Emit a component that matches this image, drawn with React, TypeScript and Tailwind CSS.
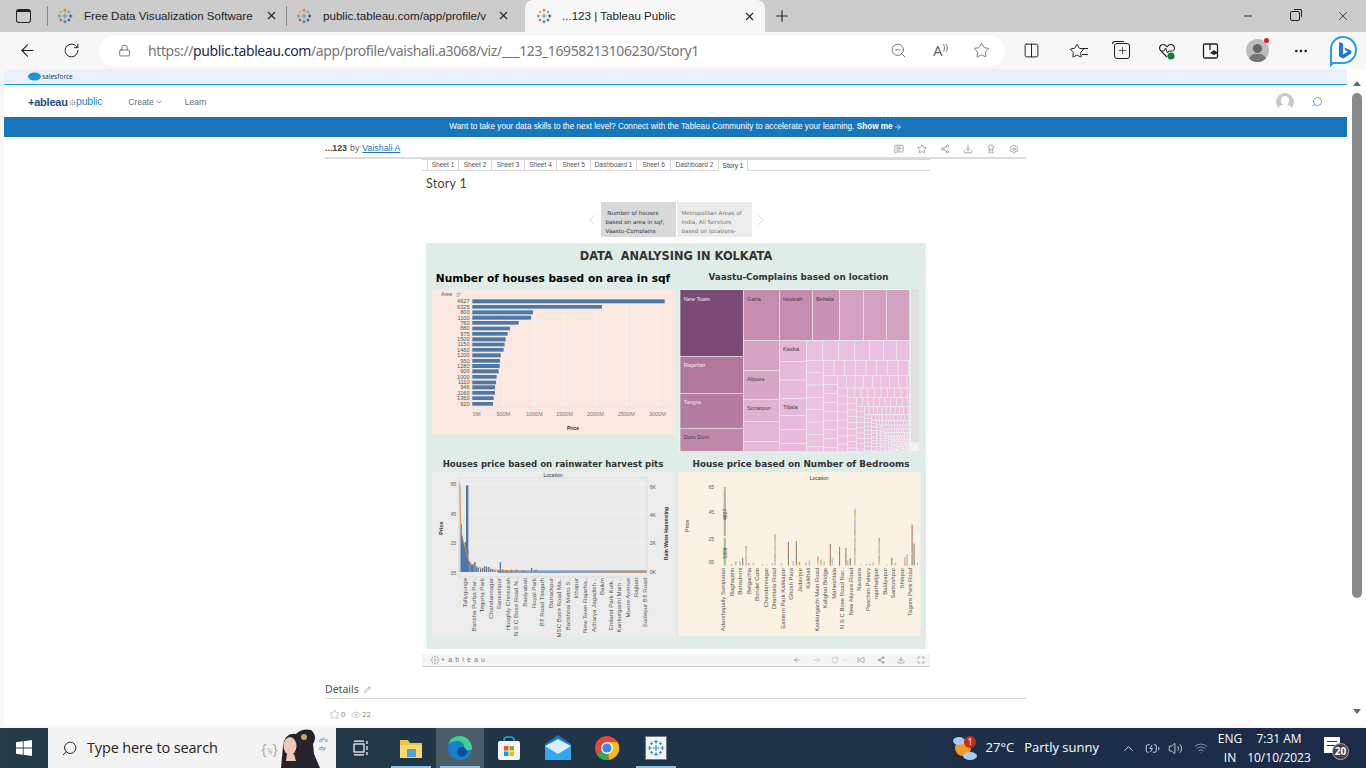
import React from 'react';
import {
  ArrowLeft, RotateCw, Lock, ZoomOut, Star, Columns2, Search, X, Plus, Minus, ChevronDown, ChevronUp,
  ChevronLeft, ChevronRight, MoreHorizontal, Share2, Settings, Award, Pencil, Eye, Volume2, Wifi, ArrowRight,
  Download, MessageSquareText, BatteryCharging, SkipBack, Maximize,
} from 'lucide-react';

const CROSSES: [number, number, number, string][] = [
  [12, 12, 4, '#7f8fa8'], [12, 3.5, 2.6, '#e8762b'], [12, 20.5, 2.6, '#4e79a7'], [3.5, 12, 2.6, '#59a89c'],
  [20.5, 12, 2.6, '#1f4e89'], [6, 6, 2, '#f0a030'], [18, 6, 2, '#5aa5c8'], [6, 18, 2, '#c8354a'], [18, 18, 2, '#1f3f77'],
];

const TableauMark = ({ size = 16, mono }: { size?: number; mono?: string }) => (
  <svg width={size} height={size} viewBox="0 0 24 24" fill="none" className="shrink-0">
    {CROSSES.map(([x, y, r, c], i) => (
      <path key={i} d={`M${x - r} ${y}H${x + r}M${x} ${y - r}V${y + r}`} stroke={mono || c} strokeWidth="1.6" />
    ))}
  </svg>
);

const Tab = ({ title, width }: { title: string; width: number }) => (
  <div className="flex items-center h-full shrink-0" style={{ width }}>
    <TableauMark />
    <span className="ml-[11px] flex-1 min-w-0 text-[11.6px] text-[#222] whitespace-nowrap font-['Liberation_Sans',sans-serif]">{title}</span>
    <X size={13} className="ml-[8px] text-[#222] shrink-0" />
  </div>
);

const BrowserChrome = () => (
  <>
    <div className="h-[32px] bg-[#cccccc] flex items-center shrink-0">
      <div className="w-[47px] flex justify-center">
        <div className="w-[15px] h-[14px] rounded-[3px] border-[1.5px] border-[#222] border-t-[3px]" />
      </div>
      <div className="w-px h-[20px] bg-[#888]" />
      <div className="ml-[9px]"><Tab title="Free Data Visualization Software" width={221} /></div>
      <div className="ml-[8px] w-px h-[20px] bg-[#888]" />
      <div className="ml-[9px]"><Tab title="public.tableau.com/app/profile/v" width={214} /></div>
      <div className="ml-[15px] w-[240px] h-full bg-[#f7f7f7] rounded-t-[8px] flex items-center pl-[11px] pr-[9px]">
        <TableauMark />
        <span className="ml-[10px] flex-1 text-[11.6px] text-[#222] whitespace-nowrap font-['Liberation_Sans',sans-serif]">...123 | Tableau Public</span>
        <X size={13} className="text-[#222]" />
      </div>
      <Plus size={18} strokeWidth={1.5} className="ml-[8px] text-[#222]" />
      <div className="ml-auto flex items-center">
        <Minus size={12} className="mr-[36px] text-[#222]" />
        <div className="mr-[36px] relative w-[10px] h-[10px] border border-[#222] rounded-[2px]">
          <div className="absolute -top-[3px] -right-[3px] w-[8px] h-[8px] border-t border-r border-[#222] rounded-tr-[2px]" />
        </div>
        <X size={14} strokeWidth={1.4} className="mr-[16px] text-[#222]" />
      </div>
    </div>
    <div className="h-[37px] bg-[#f7f7f7] flex items-center shrink-0 relative">
      <ArrowLeft size={19} strokeWidth={1.4} className="ml-[18px] text-[#222]" />
      <RotateCw size={17} strokeWidth={1.4} className="ml-[26px] text-[#222]" />
      <div className="ml-[19px] w-[906px] h-[30px] bg-white rounded-full flex items-center pl-[19px]">
        <Lock size={13} strokeWidth={1.4} className="text-[#555]" />
        <span className="ml-[17px] text-[14px] tracking-[-0.4px] text-[#767676] whitespace-nowrap">
          https://<span className="text-[#1c2b4a]">public.tableau.com</span>/app/profile/vaishali.a3068/viz/___123_16958213106230/Story1
        </span>
        <div className="ml-auto flex items-center text-[#666] pr-[15px]">
          <ZoomOut size={17} strokeWidth={1.2} />
          <span className="ml-[26px] w-[18px] text-[15px] leading-none">A<span className="text-[9px] align-top">))</span></span>
          <Star size={17} strokeWidth={1.2} className="ml-[22px]" />
        </div>
      </div>
      <div className="ml-[18px] flex items-center text-[#222]">
        <Columns2 size={17} strokeWidth={1.4} />
        <div className="ml-[29px] relative">
          <Star size={16} strokeWidth={1.5} />
          <div className="absolute left-[13px] top-[5px] w-[6px] h-[7px] border-y border-[#222]" />
        </div>
        <div className="ml-[29px] relative w-[16px] h-[16px] border-[1.5px] border-[#222] rounded-[3px] flex items-center justify-center">
          <div className="absolute -left-[3px] -top-[3px] w-[12px] h-[3px] border-t-[1.5px] border-l-[1.5px] border-[#222] rounded-tl-[3px]" />
          <Plus size={11} strokeWidth={1.6} />
        </div>
        <svg className="ml-[28px]" width="18" height="18" viewBox="0 0 18 18" fill="none">
          <path d="M9 15 2.600 8.600a3.600 3.600 0 0 1 5.200-5L9 4.700l1.200-1.100a3.600 3.600 0 0 1 5.200 5" stroke="#222" strokeWidth="1.2" />
          <path d="M3 9h3l1.500-3 2 5 1.400-2H15" stroke="#222" strokeWidth="1" />
          <circle cx="13" cy="14" r="3.500" fill="#107c41" />
        </svg>
        <svg className="ml-[26px]" width="18" height="18" viewBox="0 0 18 18" fill="none">
          <rect x="1.500" y="2" width="14" height="14" rx="1.500" stroke="#222" strokeWidth="1.300" />
          <path d="M8 2v6" stroke="#222" strokeWidth="1.300" />
          <path d="M8 11l4-3 4 3-4 2z" fill="#222" />
        </svg>
        <div className="ml-[26px] relative w-[23px] h-[23px] rounded-full bg-[#bdbdbd] overflow-hidden">
          <div className="absolute left-[7px] top-[5px] w-[9px] h-[9px] rounded-full bg-[#666]" />
          <div className="absolute left-[3px] top-[15px] w-[17px] h-[12px] rounded-full bg-[#777]" />
        </div>
        <div className="w-[5px] h-[5px] rounded-full bg-[#e81123] -ml-[5px] -mt-[20px] z-10" />
        <MoreHorizontal size={16} className="ml-[24px]" />
        <svg className="ml-[19px]" width="30" height="32" viewBox="0 0 30 32" fill="none">
          <path d="M15 2a13 13 0 0 1 13 13 13 13 0 0 1-13 13H5l-2 2V15A12 12 0 0 1 15 2z" fill="#fff" stroke="#2b9de8" strokeWidth="2" />
          <path d="M11 7l4 1.500v11l5-3-2.500-1-1.200-3 7 3v3l-8 5-4.300-2z" fill="#1f78d1" />
        </svg>
      </div>
    </div>
  </>
);

const Banner = () => (
  <div className="shrink-0">
    <div className="h-[15px] bg-[#eaf1fb] border-b border-[#1ba0d8] flex items-center pl-[24px] box-content">
      <svg width="13" height="9" viewBox="0 0 13 9"><ellipse cx="6.500" cy="4.500" rx="6.500" ry="4" fill="#1b96d6" /></svg>
      <span className="ml-[1px] text-[6.5px] text-[#28455f]">salesforce</span>
    </div>
    <div className="h-[32px] flex items-center pl-[24px] pr-[24px] pt-[2px] font-['Liberation_Sans',sans-serif]">
      <span className="w-[41px] text-[11px] font-bold text-[#1f4e89] tracking-[-0.02em]">+ableau</span>
      <TableauMark size={7} />
      <span className="text-[10.5px] text-[#2a86c8] tracking-[-0.02em]">public</span>
      <span className="ml-[26px] text-[8.5px] text-[#5d6d7d]">Create</span>
      <ChevronDown size={8} className="ml-[1px] text-[#5d6d7d]" />
      <span className="ml-[22px] text-[8.5px] text-[#5d6d7d]">Learn</span>
      <div className="ml-auto w-[18px] h-[18px] rounded-full bg-[#c8c8c8] relative overflow-hidden">
        <div className="absolute left-[5px] top-[3px] w-[8px] h-[9px] rounded-full bg-white" />
        <div className="absolute left-[2px] top-[12px] w-[14px] h-[10px] rounded-full bg-white" />
      </div>
      <Search size={12} strokeWidth={1.2} className="ml-[17px] text-[#2a6ab0] -scale-x-100" />
    </div>
    <div className="h-[20px] bg-[#1a76bb] flex items-center justify-center text-[8.2px] text-white font-['Liberation_Sans',sans-serif]">
      Want to take your data skills to the next level? Connect with the Tableau Community to accelerate your learning.&nbsp;
      <span className="font-bold">Show me</span>
      <ArrowRight size={8} className="ml-[1px]" />
    </div>
  </div>
);

const BARS: [string, number, number, number][] = [
  ['4627', 71, 58, 716], ['6325', 87, 75, 528], ['800', 104, 91, 321], ['1100', 120, 107, 315], ['760', 135, 123, 278],
  ['880', 152, 140, 252], ['975', 168, 156, 245], ['1500', 185, 172, 239], ['1150', 200, 188, 236], ['1460', 216, 204, 233],
  ['1200', 233, 220, 224], ['950', 249, 237, 222], ['1280', 265, 252, 221], ['900', 281, 268, 218], ['1000', 297, 285, 212],
  ['1110', 314, 302, 210], ['946', 329, 316, 207], ['1160', 345, 333, 207], ['1360', 361, 349, 203], ['920', 378, 366, 201],
];

const BarChart = () => (
  <svg viewBox="18 27 732 438" className="w-[244px] h-[146px] block" fontFamily="'Liberation Sans', sans-serif">
    <rect x="18" y="27" width="732" height="438" fill="#fae9e1" />
    <text x="46" y="49" fontSize="15" fill="#555">Area</text>
    <path d="M92 40h14M92 45h10M92 50h6" stroke="#777" strokeWidth="1.500" />
    {[232, 325, 417, 510, 601, 694].map(x => <path key={x} d={`M${x} 56V380`} stroke="#fff" strokeWidth="2" opacity="0.7" />)}
    <path d="M139 56V380M139 380H750" stroke="#f3ddd3" strokeWidth="2" />
    {BARS.map(([label, base, top, end]) => (
      <g key={label + top}>
        <rect x="139" y={top} width={end - 139} height={base - top - 1} fill="#4e79a7" />
        <text x="131" y={base - 1} textAnchor="end" fontSize="17" fill="#555">{label}</text>
      </g>
    ))}
    {['0M', '500M', '1000M', '1500M', '2000M', '2500M', '3000M'].map((t, i) => (
      <text key={t} x={[152, 232, 325, 415, 508, 601, 694][i]} y="409" textAnchor="middle" fontSize="16.500" fill="#777">{t}</text>
    ))}
    <text x="441" y="449" textAnchor="middle" fontSize="15" fontWeight="bold" fill="#333">Price</text>
  </svg>
);

type Cell = { x: number; y: number; w: number; h: number; c: string; t?: string };

const TOP_CELLS: Cell[] = [
  { x: 13, y: 27, w: 188, h: 198, c: '#7b4a75', t: 'New Town' },
  { x: 13, y: 227, w: 188, h: 109, c: '#b2789b', t: 'Rajarhat' },
  { x: 13, y: 338, w: 188, h: 103, c: '#b47d9f', t: 'Tangra' },
  { x: 13, y: 443, w: 188, h: 67, c: '#bf88a9', t: 'Dum Dum' },
  { x: 203, y: 27, w: 106, h: 150, c: '#c48cae', t: 'Garia' },
  { x: 311, y: 27, w: 97, h: 150, c: '#c48cae', t: 'Howrah' },
  { x: 410, y: 27, w: 79, h: 150, c: '#c893b3', t: 'Behala' },
  { x: 491, y: 27, w: 70, h: 150, c: '#d3a2c0' },
  { x: 563, y: 27, w: 67, h: 150, c: '#d3a2c0' },
  { x: 632, y: 27, w: 68, h: 150, c: '#d3a2c0' },
  { x: 203, y: 179, w: 106, h: 88, c: '#d5a5c3' },
  { x: 203, y: 269, w: 106, h: 85, c: '#d5a7c4', t: 'Alipore' },
  { x: 203, y: 356, w: 106, h: 64, c: '#dfb2d0', t: 'Sonarpur' },
  { x: 203, y: 422, w: 106, h: 58, c: '#e3b6d4' },
  { x: 203, y: 482, w: 106, h: 28, c: '#e5bad8' },
  { x: 311, y: 179, w: 79, h: 61, c: '#e4b7d6', t: 'Kasba' },
  { x: 311, y: 242, w: 79, h: 54, c: '#e6bada' },
  { x: 311, y: 298, w: 79, h: 53, c: '#e6bada' },
  { x: 311, y: 353, w: 79, h: 49, c: '#e6bada', t: 'Tiljala' },
  { x: 311, y: 404, w: 79, h: 40, c: '#e6bada' },
  { x: 311, y: 446, w: 79, h: 40, c: '#e6bada' },
  { x: 311, y: 488, w: 79, h: 22, c: '#e6bada' },
  ...[[392, 46], [440, 46], [488, 46], [536, 43], [581, 40], [623, 37], [662, 38]].map(([x, w]) => ({ x, y: 179, w, h: 58, c: '#e9c0df' })),
];

// the tail of the treemap: columns and rows that keep shrinking towards the corner
const tailCells = () => {
  const cells: Cell[] = [];
  const steps = [[49, 35, 43, 30], [41, 25, 36, 24], [28, 22, 26, 18], [25, 17, 25, 15], [22, 14, 23, 11], [19, 10, 15, 9], [12, 8, 12, 7], [12, 6, 10, 6], [10, 5, 9, 5], [8, 4, 8, 4], [7, 3, 7, 3], [6, 3, 6, 3], [5, 2, 5, 2], [5, 2, 5, 2], [5, 2, 5, 2], [5, 2, 5, 2], [5, 2, 5, 2]];
  let x = 392;
  let y = 239;
  for (const [colW, cellH, rowH, cellW] of steps) {
    if (x >= 700 || y >= 510) break;
    for (let cy = y; cy < 510; cy += cellH + 2) cells.push({ x, y: cy, w: colW, h: Math.min(cellH, 510 - cy), c: '#ebc2e0' });
    x += colW + 2;
    for (let cx = x; cx < 700; cx += cellW + 2) cells.push({ x: cx, y, w: Math.min(cellW, 700 - cx), h: rowH, c: '#ebc2e0' });
    y += rowH + 2;
  }
  return cells;
};

const Treemap = () => (
  <svg viewBox="9 24 720 486" className="w-[240px] h-[162px] block" fontFamily="'Liberation Sans', sans-serif">
    <rect x="9" y="24" width="695" height="486" fill="#eef4f1" />
    {[...TOP_CELLS, ...tailCells()].map((c, i) => (
      <g key={i}>
        <rect x={c.x} y={c.y} width={c.w} height={c.h} fill={c.c} />
        {c.t && <text x={c.x + 10} y={c.y + 32} fontSize="17" fill={c.t === 'New Town' || c.t === 'Rajarhat' || c.t === 'Tangra' ? '#f3e6ef' : '#4a3a45'}>{c.t}</text>}
      </g>
    ))}
    <rect x="705" y="24" width="24" height="459" fill="#e0e0e0" />
    <rect x="705" y="483" width="24" height="27" fill="#f2f2f2" />
  </svg>
);

const RAIN_LABELS = ['Tollygunge', 'Barisha Purba Par..', 'Tegoria Park', 'Chandannagar', 'Santoshpur', 'Hooghly Chinsurah', 'N S C Bose Road N..', 'Baidyabati', 'Royal Park', 'BT Road Titagarh', 'Barrackpur', 'MSC Bose Road Ma..', 'Barishnai Metro S..', 'Ichapur', 'New Town Rajarha..', 'Acharya Jagadish ..', 'Baikm', 'Entland Park Kolk..', 'Kankurgachi Main ..', 'Moore Avenue', 'Rajbati', 'Sodepur BT Road'];

const RAIN_BARS: [number, number][] = [
  [101, 97], [104, 210], [107, 245], [110, 262], [113, 275], [116, 262], [120, 92], [123, 285], [126, 318], [130, 322], [134, 330],
  [138, 330], [142, 326], [145, 322], [150, 335], [155, 340], [162, 342], [168, 340], [174, 334], [180, 336], [186, 337], [192, 342], [198, 344], [205, 346], [214, 346],
  [221, 323], [228, 344], [240, 346], [255, 345], [270, 345], [290, 346], [315, 340], [328, 345],
];

const RainChart = () => (
  <svg viewBox="18 52 732 495" className="w-[244px] h-[165px] block" fontFamily="'Liberation Sans', sans-serif">
    <rect x="18" y="52" width="732" height="495" fill="#ececec" />
    <rect x="99" y="70" width="564" height="297" fill="#ebebeb" stroke="#d8d8d8" strokeWidth="2" />
    <path d="M99 88H662M99 176H662M99 265H662" stroke="#f7f7f7" strokeWidth="2" />
    <text x="381" y="67" textAnchor="middle" fontSize="15" fill="#333">Location</text>
    {['65', '45', '25', '05'].map((t, i) => <text key={t} x="91" y={[95, 183, 270, 360][i]} textAnchor="end" fontSize="16" fill="#666">{t}</text>)}
    {['6K', '4K', '2K', '0K'].map((t, i) => <text key={t} x="671" y={[104, 188, 272, 359][i]} fontSize="16" fill="#666">{t}</text>)}
    <text transform="translate(51 240) rotate(-90)" fontSize="16" fontWeight="bold" fill="#333">Price</text>
    <text transform="translate(726 316) rotate(-90)" fontSize="15" fontWeight="bold" fill="#333">Rain Water Harvesting</text>
    <rect x="215" y="347" width="447" height="8" fill="#7f9fc4" />
    {RAIN_BARS.map(([x, top]) => (
      <rect key={x} x={x} y={top} width={x === 101 ? 3 : x === 120 ? 7 : 4} height={352 - top} fill={x === 101 ? '#a6bbd3' : '#4e79a7'} />
    ))}
    <path d="M101 84 104 205 108 245 115 270 122 300 130 322 150 338 200 346 300 350 410 351 662 353" fill="none" stroke="#f28e2b" strokeWidth="2.500" />
    {RAIN_LABELS.map((t, i) => (
      <text key={t} transform={`translate(${123 + i * 25.7} 370) rotate(-90)`} textAnchor="end" fontSize="18.500" fill="#555">{t}</text>
    ))}
  </svg>
);

const BED_LABELS = ['Adarshapally Sonipuran', 'Baghajatin', 'Bansdroni', 'Belgachia', 'Bondel Gate', 'Chandannagar', 'Dhamtala Road', 'Eastern Park Kalikapur', 'Ghosh Para', 'Jadavpur', 'Kaikhali', 'Kankurgachi Main Road', 'Kalighat Bridge', 'Maheshtala', 'N S C Bose Road Nar..', 'New Alipore Road', 'Naopara', 'Paschim Putiary', 'rajarhatijpur', 'Baidyapur', 'Santoshpur', 'Shibpur', 'Tagore Park Road'];

const BED_BARS: [number, number][] = [
  [131, 332], [162, 328], [175, 320], [188, 320], [197, 310], [206, 275], [214, 325], [228, 325], [255, 330], [268, 330], [285, 326], [293, 238], [312, 326],
  [334, 262], [348, 320], [358, 260], [366, 322], [386, 324], [396, 318], [422, 306], [431, 316], [441, 320], [460, 268], [465, 310], [488, 277], [507, 280], [511, 318], [520, 312],
  [533, 162], [552, 330], [568, 328], [578, 328], [588, 324], [606, 250], [631, 330], [645, 310], [655, 325], [683, 308], [690, 300], [706, 210], [712, 267], [722, 324], [730, 330],
];
const STACK = ['#d9b8a0', '#e8c9a0', '#a3c9a8', '#cbb5d4', '#e9b0b0', '#aecbdc', '#e0a070', '#b9c28a'];
const STACK_DARK = ['#8f5a4a', '#5a8a5a', '#c05050', '#a87838', '#4e79a7'];
const THIN_BARS = [197, 334, 358, 460, 488, 507, 520, 645, 706, 712];

const BedChart = () => (
  <svg viewBox="5 52 728 493" className="w-[243px] h-[164px] block" fontFamily="'Liberation Sans', sans-serif">
    <rect x="5" y="52" width="728" height="493" fill="#faf3e4" />
    <text x="428" y="76" textAnchor="middle" fontSize="15" fill="#333">Location</text>
    {['65', '45', '25', '05'].map((t, i) => <text key={t} x="113" y={[104, 179, 260, 329][i]} textAnchor="end" fontSize="16" fill="#666">{t}</text>)}
    <text transform="translate(38 232) rotate(-90)" fontSize="16" fill="#444">Price</text>
    {BED_BARS.map(([x, top]) => {
      const thin = THIN_BARS.includes(x);
      const segs = [];
      for (let y = top, k = 0; y < 333; y += 7, k++) {
        segs.push(<rect key={y} x={x} y={y} width={thin || x > 700 ? 3 : 5} height={Math.min(7, 333 - y)} fill={thin ? STACK_DARK[(x + k) % STACK_DARK.length] : STACK[(x + k) % STACK.length]} />);
      }
      return <g key={x}>{segs}</g>;
    })}
    <rect x="141" y="97" width="7" height="18" fill="#e5a8a8" />
    <rect x="141" y="115" width="7" height="130" fill="#bdb0a8" />
    <rect x="141" y="250" width="7" height="83" fill="#9cc896" />
    <text transform="translate(151 196) rotate(-90)" fontSize="15" fill="#444">4627</text>
    <text transform="translate(151 312) rotate(-90)" fontSize="15" fill="#444">5359</text>
    {BED_LABELS.map((t, i) => (
      <text key={t} transform={`translate(${145 + i * 25.6} 340) rotate(-90)`} textAnchor="end" fontSize="18" fill="#555">{t}</text>
    ))}
  </svg>
);

const Dashboard = () => {
  const titleFont = "font-['DejaVu_Sans',sans-serif] font-bold whitespace-nowrap text-center";
  return (
    <div className="ml-[4px] w-[500px] h-[406px] bg-[#dfede9]">
      <div className="h-[27px] flex items-center justify-center text-[11.4px] font-bold text-[#333] font-['DejaVu_Sans',sans-serif]">DATA&nbsp; ANALYSING IN KOLKATA</div>
      <div className="grid grid-cols-2 grid-rows-[186px_193px]">
        <div>
          <div className={`h-[19px] leading-[17px] pl-[4px] text-[10.6px] text-black ${titleFont}`}>Number of houses based on area in sqf</div>
          <div className="ml-[6px]"><BarChart /></div>
        </div>
        <div>
          <div className={`h-[19px] leading-[14px] pr-[5px] text-[8.8px] text-[#333] ${titleFont}`}>Vaastu-Complains based on location</div>
          <div className="ml-[3px]"><Treemap /></div>
        </div>
        <div>
          <div className={`h-[16px] leading-[16px] pl-[4px] text-[8.6px] text-[#333] ${titleFont}`}>Houses price based on rainwater harvest pits</div>
          <div className="ml-[6px]"><RainChart /></div>
        </div>
        <div>
          <div className={`h-[16px] leading-[16px] text-[8.9px] text-[#333] ${titleFont}`}>House price based on Number of Bedrooms</div>
          <div className="ml-[2px]"><BedChart /></div>
        </div>
      </div>
    </div>
  );
};

const VIEW_TABS: [string, number][] = [['Sheet 1', 31], ['Sheet 2', 33], ['Sheet 3', 33], ['Sheet 4', 32], ['Sheet 5', 34], ['Dashboard 1', 46], ['Sheet 6', 34], ['Dashboard 2', 48]];

const VizArea = () => (
  <div className="mx-auto w-[701px]">
    <div className="h-[22px] pt-[3px] flex items-center border-b-2 border-[#dcdcdc] text-[8.8px] text-[#666] font-['Liberation_Sans',sans-serif]">
      <span className="font-bold text-[#444]">...123</span>
      <span className="ml-[3px]">by</span>
      <span className="ml-[3px] text-[#1a76bb] underline">Vaishali A</span>
      <div className="ml-auto flex items-center gap-[13px] pr-[7px] text-[#999]">
        <MessageSquareText size={10} />
        <Star size={10} />
        <Share2 size={10} />
        <Download size={10} />
        <Award size={10} />
        <Settings size={10} />
      </div>
    </div>
    <div className="ml-[97px] w-[508px]">
      <div className="h-[10px] flex border-y border-[#d8d8d8] pl-[5px] box-content">
        {VIEW_TABS.map(([name, w]) => (
          <div key={name} style={{ width: w }} className="shrink-0 flex items-center justify-center border-l border-[#d8d8d8] text-[6.6px] text-[#555] font-['Liberation_Sans',sans-serif]">{name}</div>
        ))}
        <div className="w-[30px] h-[11px] bg-white border-x border-[#d8d8d8] flex items-center justify-center text-[6.6px] text-[#333] font-['Liberation_Sans',sans-serif]">Story 1</div>
      </div>
      <div className="ml-[4px] h-[26px] flex items-center text-[12.5px] text-[#444] font-['Lato',sans-serif] tracking-[0.02em]">Story 1</div>
      <div className="h-[35px] flex items-center justify-center mt-[5px]">
        <ChevronLeft size={18} strokeWidth={1} className="text-[#c8c8c8]" />
        <div className="w-[75px] h-[35px] bg-[#d9d9d9]">
          <div className="h-[31px] overflow-hidden px-[5px] pt-[7px] text-[5.6px] leading-[9px] text-[#333] font-['DejaVu_Sans',sans-serif]">
            &nbsp;Number of houses based on area in sqf, Vaastu-Complains
          </div>
        </div>
        <div className="ml-px w-[75px] h-[35px] bg-[#ececec]">
          <div className="h-[31px] overflow-hidden px-[5px] pt-[7px] text-[5.6px] leading-[9px] text-[#777] font-['DejaVu_Sans',sans-serif]">
            Metropolitan Areas of India, All Services based on locations-
          </div>
        </div>
        <ChevronRight size={18} strokeWidth={1} className="text-[#c8c8c8]" />
      </div>
      <div className="mt-[6px]"><Dashboard /></div>
      <div className="mt-[5px] h-[13px] bg-[#f5f5f5] border-b border-[#ccc] flex items-center pl-[8px] pr-[5px] text-[#888]">
        <TableauMark size={10} mono="#aaa" />
        <span className="ml-[1px] text-[7px] tracking-[0.45em] text-[#777] font-['Liberation_Sans',sans-serif]">+ableau</span>
        <div className="ml-auto flex items-center">
          <ArrowLeft size={8} />
          <ArrowRight size={8} className="ml-[12px] text-[#bbb]" />
          <RotateCw size={8} className="ml-[10px] text-[#bbb]" />
          <ChevronDown size={6} className="ml-[3px] text-[#bbb]" />
          <SkipBack size={8} className="ml-[9px]" />
          <Share2 size={8} className="ml-[12px]" />
          <Download size={8} className="ml-[12px]" />
          <Maximize size={8} className="ml-[12px]" />
        </div>
      </div>
    </div>
    <div className="mt-[14px] h-[18px] flex items-center border-b border-[#dcdcdc] text-[10.5px] text-[#4a5560]">
      Details
      <Pencil size={7} className="ml-[5px] text-[#888]" />
    </div>
    <div className="mt-[10px] flex items-center pl-[4px] text-[7.5px] text-[#888]">
      <Star size={11} strokeWidth={1} />
      <span className="ml-[1px]">0</span>
      <Eye size={10} strokeWidth={1} className="ml-[6px]" />
      <span className="ml-[1px]">22</span>
    </div>
  </div>
);

const Scrollbar = () => (
  <div className="w-[19px] shrink-0 flex flex-col items-center bg-white">
    <div className="mt-[12px] w-0 h-0 border-x-[4px] border-x-transparent border-b-[5px] border-b-[#666]" />
    <div className="mt-[7px] w-[10px] h-[505px] rounded-full bg-[#8a8a8a]" />
    <div className="mt-auto mb-[11px] w-0 h-0 border-x-[4px] border-x-transparent border-t-[5px] border-t-[#666]" />
  </div>
);

const TaskIcon = ({ children, active, underline }: { children: React.ReactNode; active?: boolean; underline?: boolean }) => (
  <div className={`w-[48px] mr-[1px] h-full flex items-center justify-center relative ${active ? 'bg-[#4a5d68]' : ''}`}>
    {children}
    {underline && <div className="absolute bottom-0 left-[4px] right-[4px] h-[2px] bg-[#8fc4ea]" />}
  </div>
);

const Taskbar = () => (
  <div className="h-[40px] shrink-0 flex items-center text-white bg-gradient-to-r from-[#243c46] to-[#1b2a47] font-['Open_Sans',sans-serif]">
    <div className="w-[48px] flex justify-center">
      <svg width="16" height="16" viewBox="0 0 16 16" fill="#fff"><path d="M0 2.300 6.800 1.300V7.600H0zM7.600 1.200 16 0V7.600H7.600zM0 8.400H6.800V14.700L0 13.700zM7.600 8.400H16V16L7.600 14.800z" /></svg>
    </div>
    <div className="w-[288px] h-full bg-[#f3f3f3] flex items-center text-[#222] overflow-hidden">
      <Search size={17} strokeWidth={1.4} className="ml-[13px] -scale-x-100" />
      <span className="ml-[9px] text-[14.5px] tracking-[-0.01em]">Type here to search</span>
      <span className="ml-auto text-[15px] text-[#aaa]">{'{'}<span className="text-[8px]">⅟₃</span>{'}'}</span>
      <svg width="58" height="40" viewBox="0 0 58 40">
        <path d="M3 40 5 18Q7 4 18 6 24 0 33 2 40 8 35 16L36 26 42 40z" fill="#26222b" />
        <ellipse cx="12" cy="18" rx="6.500" ry="9" fill="#ecc9b8" />
        <path d="M9 26h7l2 7H8z" fill="#ecc9b8" />
        <circle cx="26" cy="9" r="3" fill="#c8a860" />
        <text x="41" y="14" fontSize="6" fill="#666">d²x</text>
        <text x="41" y="22" fontSize="6" fill="#666">dy</text>
      </svg>
    </div>
    <div className="w-[49px] mr-[2px] flex justify-center">
      <svg width="16" height="16" viewBox="0 0 16 16" fill="none" stroke="#fff" strokeWidth="1.200">
        <rect x="1" y="4" width="10" height="8" /><path d="M1 1.200h10M1 14.800h10M14 1v3M14 6v4M14 12v3" />
      </svg>
    </div>
    <TaskIcon underline>
      <svg width="22" height="20" viewBox="0 0 22 20"><path d="M0 2h8l2 3h12v13H0z" fill="#f4c346" /><rect x="0" y="7" width="22" height="13" fill="#fbd96b" /><rect x="7" y="11" width="9" height="8" fill="#4aa3df" /></svg>
    </TaskIcon>
    <TaskIcon active underline>
      <svg width="26" height="26" viewBox="0 0 26 26">
        <circle cx="13" cy="13" r="12" fill="#1b7fd0" />
        <path d="M25 14C25 6 19 1 13 1 7 1 3 4 1.500 9 5 5 14 4 17 10c1 3-2 5-6 5h8c4 0 6 0 6-1z" fill="#3ed18f" />
        <circle cx="15" cy="17" r="5" fill="#0d4f96" />
      </svg>
    </TaskIcon>
    <TaskIcon>
      <svg width="22" height="24" viewBox="0 0 22 24">
        <path d="M6 6V3a3 3 0 0 1 3-2h4a3 3 0 0 1 3 2v3" fill="none" stroke="#28a8e0" strokeWidth="1.500" />
        <rect x="0" y="5" width="22" height="19" rx="2" fill="#f5f5f5" />
        <rect x="6" y="10" width="4.500" height="4.500" fill="#f25022" /><rect x="11.500" y="10" width="4.500" height="4.500" fill="#7fba00" />
        <rect x="6" y="15.500" width="4.500" height="4.500" fill="#00a4ef" /><rect x="11.500" y="15.500" width="4.500" height="4.500" fill="#ffb900" />
      </svg>
    </TaskIcon>
    <TaskIcon>
      <svg width="26" height="26" viewBox="0 0 26 26">
        <path d="M0 9 13 0l13 9v16H0z" fill="#1578c9" />
        <path d="M0 11h26v14H0z" fill="#33a8ec" />
        <path d="M0 11l13 8 13-8-13-7z" fill="#d8eefc" />
      </svg>
    </TaskIcon>
    <TaskIcon>
      <svg width="26" height="26" viewBox="0 0 26 26">
        <circle cx="13" cy="13" r="12" fill="#e8453c" />
        <path d="M13 13 2.600 19A12 12 0 0 0 15 24.800z" fill="#34a853" />
        <path d="M13 7h10.600A12 12 0 0 1 15 24.800z" fill="#fbbc05" />
        <circle cx="13" cy="13" r="6" fill="#fff" /><circle cx="13" cy="13" r="4.600" fill="#4285f4" />
      </svg>
    </TaskIcon>
    <TaskIcon underline>
      <div className="w-[22px] h-[24px] bg-[#eef3f6] border border-[#777] flex items-center justify-center"><TableauMark size={18} mono="#4a90b8" /></div>
    </TaskIcon>
    <div className="ml-auto flex items-center h-full">
      <svg width="26" height="26" viewBox="0 0 26 26">
        <circle cx="11" cy="13" r="8" fill="#f39a1f" />
        <ellipse cx="7" cy="6" rx="6" ry="4" fill="#a7cdf0" /><ellipse cx="18" cy="21" rx="7" ry="4" fill="#a7cdf0" />
        <circle cx="18" cy="7" r="6" fill="#c42b1c" />
        <text x="18" y="10" fontSize="9" fill="#fff" textAnchor="middle">1</text>
      </svg>
      <span className="ml-[8px] text-[13px]">27°C</span>
      <span className="ml-[10px] text-[13px]">Partly sunny</span>
      <ChevronUp size={15} strokeWidth={1.3} className="ml-[22px]" />
      <BatteryCharging size={15} strokeWidth={1.2} className="ml-[9px]" />
      <Volume2 size={15} strokeWidth={1.2} className="ml-[8px]" />
      <Wifi size={14} strokeWidth={1.2} className="ml-[11px] text-[#bbb]" />
      <div className="ml-[8px] w-[28px] text-center text-[12px] leading-[19px]">ENG<br />IN</div>
      <div className="-ml-[2px] w-[74px] text-center text-[12px] leading-[19px]">7:31 AM<br />10/10/2023</div>
      <div className="ml-[8px] mr-[26px] relative w-[16px] h-[16px] bg-white -mt-[6px]">
        <div className="absolute left-[3px] top-[4px] w-[10px] h-[1px] bg-[#333]" />
        <div className="absolute left-[3px] top-[8px] w-[10px] h-[1px] bg-[#333]" />
        <div className="absolute -right-[9px] top-[6px] w-[17px] h-[17px] rounded-full bg-[#444] border border-[#aaa] flex items-center justify-center text-[10px] font-bold">20</div>
      </div>
    </div>
  </div>
);

export default function App() {
  return (
    <div className="w-[1366px] h-[768px] flex flex-col overflow-hidden bg-[#f7f7f7] font-['Noto_Sans',sans-serif]">
      <BrowserChrome />
      <div className="flex-1 min-h-0 flex pl-[4px] pb-[3px] bg-[#f7f7f7]">
        <div className="flex-1 min-w-0 bg-white rounded-tl-[6px] overflow-hidden">
          <Banner />
          <VizArea />
        </div>
        <Scrollbar />
      </div>
      <Taskbar />
    </div>
  );
}
